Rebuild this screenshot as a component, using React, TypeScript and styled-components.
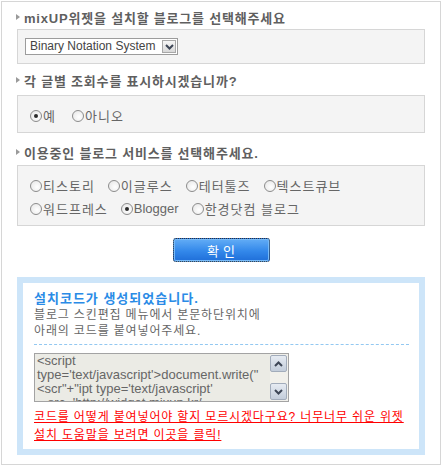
import styled, { createGlobalStyle } from "styled-components";

const FONT = `"Liberation Sans", "Noto Sans CJK KR", sans-serif`;

const GlobalStyle = createGlobalStyle`
  body {
    margin: 0;
    background: #ffffff;
    font-family: ${FONT};
  }
`;

const blogServices = [
  [
    { label: "티스토리" },
    { label: "이글루스" },
    { label: "테터툴즈" },
    { label: "텍스트큐브" },
  ],
  [
    { label: "워드프레스" },
    { label: "Blogger", checked: true, latin: true },
    { label: "한경닷컴 블로그" },
  ],
];

const codeLines = [
  "<script",
  "type='text/javascript'>document.write(\"",
  "<scr\"+\"ipt type='text/javascript'",
  "   src='http://widget.mixup.kr/",
];

const Chevron = ({ up }: { up?: boolean }) => (
  <svg width="9" height="6" viewBox="0 0 9 6">
    <path
      d={up ? "M1 5 L4.5 1.5 L8 5" : "M1 1 L4.5 4.5 L8 1"}
      fill="none"
      stroke="#3d4656"
      strokeWidth="2"
    />
  </svg>
);

const App = () => {
  return (
    <>
      <GlobalStyle />
      <Frame>
        <SectionTitle $mt={0} $mb={3}>
          mixUP위젯을 설치할 블로그를 선택해주세요
        </SectionTitle>
        <Panel $pad="8px 7px">
          <Select>
            <SelectText>Binary Notation System</SelectText>
            <SelectButton>
              <Chevron />
            </SelectButton>
          </Select>
        </Panel>

        <SectionTitle $mt={7} $mb={6}>
          각 글별 조회수를 표시하시겠습니까?
        </SectionTitle>
        <Panel $pad="8px 12px 5px">
          <RadioRow>
            <RadioItem $space={16}>
              <RadioMark $checked />예
            </RadioItem>
            <RadioItem $space={13}>
              <RadioMark />
              아니오
            </RadioItem>
          </RadioRow>
        </Panel>

        <SectionTitle $mt={10} $mb={4}>
          이용중인 블로그 서비스를 선택해주세요.
        </SectionTitle>
        <Panel $pad="8px 12px 5px">
          {blogServices.map((row, i) => (
            <RadioRow key={i}>
              {row.map((item) => (
                <RadioItem key={item.label} $space={13} $latin={item.latin}>
                  <RadioMark $checked={item.checked} />
                  {item.label}
                </RadioItem>
              ))}
            </RadioRow>
          ))}
        </Panel>

        <ConfirmButton>확인</ConfirmButton>

        <ResultBox>
          <ResultInner>
            <ResultTitle>설치코드가 생성되었습니다.</ResultTitle>
            <ResultText>
              블로그 스킨편집 메뉴에서 본문하단위치에
              <br />
              아래의 코드를 붙여넣어주세요.
            </ResultText>
            <DashedLine />
            <CodeBox>
              <CodeText>
                {codeLines.map((line) => (
                  <div key={line}>{line}</div>
                ))}
              </CodeText>
              <ScrollBar>
                <ScrollButton>
                  <Chevron up />
                </ScrollButton>
                <ScrollButton>
                  <Chevron />
                </ScrollButton>
              </ScrollBar>
            </CodeBox>
            <HelpLink href="#">
              코드를 어떻게 붙여넣어야 할지 모르시겠다구요? 너무너무 쉬운 위젯
              <br />
              설치 도움말을 보려면 이곳을 클릭!
            </HelpLink>
          </ResultInner>
        </ResultBox>
      </Frame>
    </>
  );
};

export default App;

const Frame = styled.div`
  box-sizing: border-box;
  width: 440px;
  height: 464px;
  margin: 1px 0 0 1px;
  padding: 6px 15px 0;
  border: 1px solid #d6d6d6;
`;

const SectionTitle = styled.div<{ $mt: number; $mb: number }>`
  display: flex;
  align-items: center;
  gap: 4px;
  height: 18px;
  margin: ${(p) => p.$mt}px 0 ${(p) => p.$mb}px -1px;
  font-size: 13px;
  font-weight: bold;
  letter-spacing: 0.8px;
  color: #5f5f5f;
  white-space: nowrap;

  &::before {
    content: "";
    border-left: 4px solid #9a9a9a;
    border-top: 3.5px solid transparent;
    border-bottom: 3.5px solid transparent;
  }
`;

const Panel = styled.div<{ $pad: string }>`
  padding: ${(p) => p.$pad};
  border: 1px solid #d6d6d6;
  background: #f4f4f4;
`;

const Select = styled.div`
  display: flex;
  align-items: center;
  box-sizing: border-box;
  width: 153px;
  height: 17px;
  border: 1px solid #9c9c9c;
  background: #ffffff;
  font-size: 12px;
  color: #444444;
`;

const SelectText = styled.span`
  flex: 1;
  padding-left: 4px;
  line-height: 15px;
  white-space: nowrap;
`;

const SelectButton = styled.span`
  display: flex;
  align-items: center;
  justify-content: center;
  box-sizing: border-box;
  width: 14px;
  height: 13px;
  margin-right: 1px;
  border: 1px solid #a8a8a8;
  background: linear-gradient(#f6f6f6, #d8d8d8);
`;

const RadioRow = styled.div`
  display: flex;
  align-items: center;
  height: 23px;
`;

const RadioItem = styled.label<{ $space: number; $latin?: boolean }>`
  display: inline-flex;
  align-items: center;
  gap: 1px;
  margin-right: ${(p) => p.$space}px;
  font-size: 13px;
  letter-spacing: ${(p) => (p.$latin ? 0 : 1)}px;
  color: #666666;
  white-space: nowrap;
`;

const RadioMark = styled.span<{ $checked?: boolean }>`
  position: relative;
  box-sizing: border-box;
  width: 12px;
  height: 12px;
  border: 1px solid #8c8c8c;
  border-radius: 50%;
  background: radial-gradient(circle at 60% 60%, #ffffff, #e4e4e4);

  &::after {
    content: "";
    display: ${(p) => (p.$checked ? "block" : "none")};
    position: absolute;
    left: 3px;
    top: 3px;
    width: 4px;
    height: 4px;
    border-radius: 50%;
    background: #2b2b2b;
  }
`;

const ConfirmButton = styled.button`
  display: block;
  box-sizing: border-box;
  width: 97px;
  height: 24px;
  margin: 12px auto 0;
  padding: 0 0 0 4px;
  border: 1px dotted #333333;
  border-radius: 3px;
  background: linear-gradient(#63adf6, #3388ea 55%, #1f6fd9);
  box-shadow: inset 0 0 0 1px #78baf7;
  font-family: ${FONT};
  font-size: 13px;
  letter-spacing: 4px;
  color: #ffffff;
  cursor: pointer;
`;

const ResultBox = styled.div`
  box-sizing: border-box;
  height: 178px;
  margin-top: 15px;
  border: 6px solid #cde5f9;
`;

const ResultInner = styled.div`
  padding: 8px 10px 0 11px;
`;

const ResultTitle = styled.div`
  font-size: 13px;
  font-weight: bold;
  line-height: 16px;
  letter-spacing: 1px;
  color: #2a8be6;
  white-space: nowrap;
`;

const ResultText = styled.div`
  font-size: 12px;
  line-height: 16px;
  letter-spacing: 0.85px;
  color: #666666;
  white-space: nowrap;
`;

const DashedLine = styled.div`
  margin-top: 5px;
  border-top: 1px dashed #93c8f1;
`;

const CodeBox = styled.div`
  display: flex;
  box-sizing: border-box;
  width: 255px;
  height: 49px;
  margin-top: 8px;
  border: 1px solid #a3a3a3;
  background: #ebebe5;
`;

const CodeText = styled.div`
  flex: 1;
  overflow: hidden;
  padding: 0 2px;
  font-size: 13px;
  line-height: 14px;
  color: #666666;
  white-space: pre;
`;

const ScrollBar = styled.div`
  display: flex;
  flex-direction: column;
  justify-content: space-between;
  width: 17px;
  padding: 1px 1px 1px 0;
  background: #f1f0eb;
`;

const ScrollButton = styled.span`
  display: flex;
  align-items: center;
  justify-content: center;
  box-sizing: border-box;
  height: 17px;
  border: 1px solid #a2acbb;
  border-radius: 2px;
  background: linear-gradient(#e6ebf2, #c3cddb);
`;

const HelpLink = styled.a`
  display: block;
  margin-top: 6px;
  font-size: 12px;
  line-height: 18px;
  letter-spacing: 0.85px;
  color: #ff0000;
  text-decoration: underline;
  white-space: nowrap;
`;
